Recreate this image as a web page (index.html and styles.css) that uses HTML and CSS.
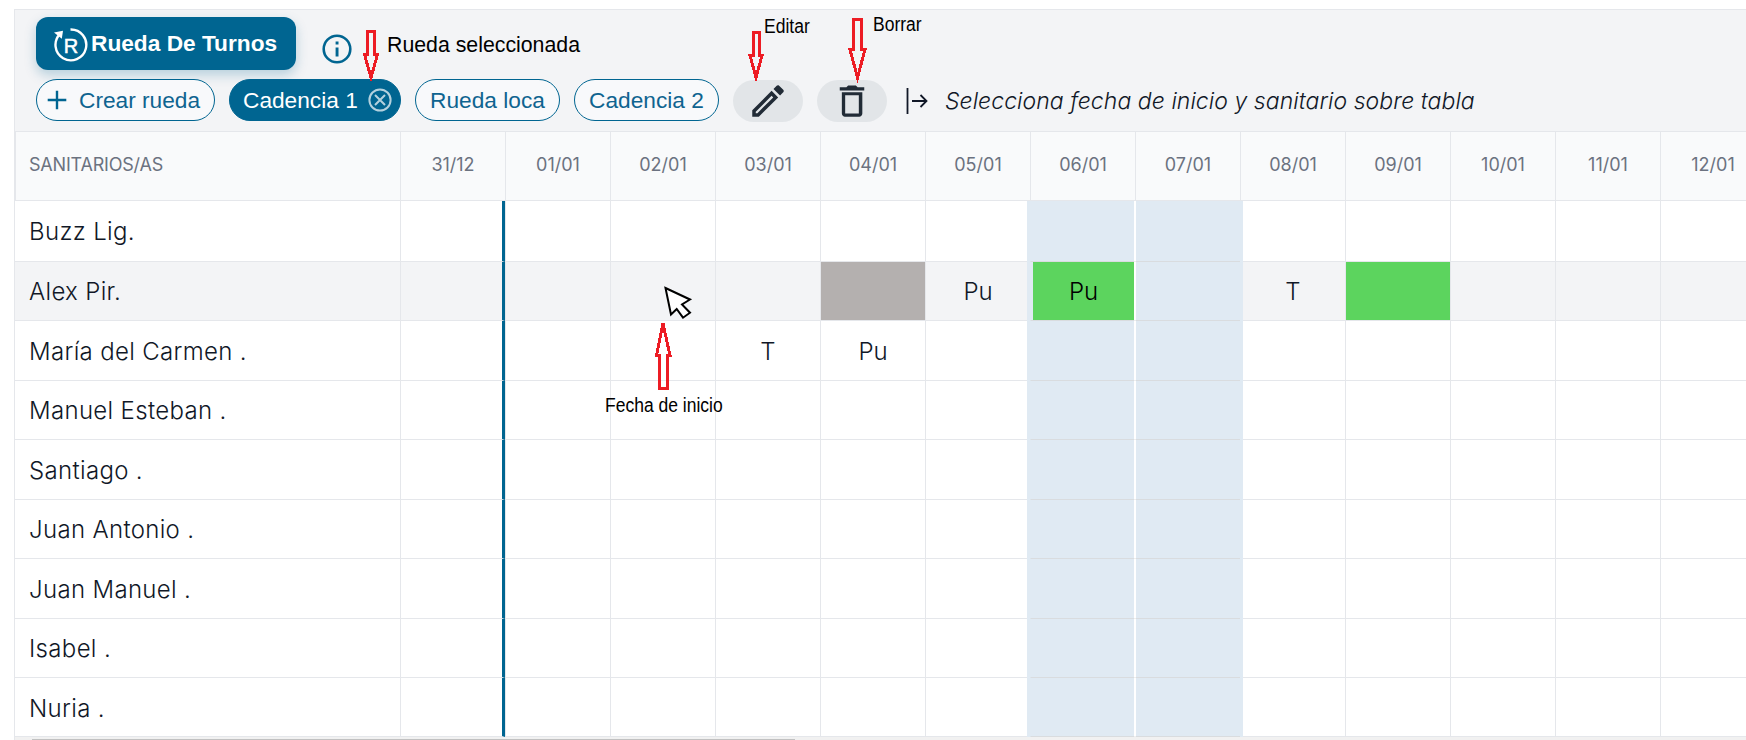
FILE: index.html
```
<!DOCTYPE html>
<html lang="es">
<head>
    <meta charset="UTF-8">
    <meta name="viewport" content="width=device-width, initial-scale=1.0">
    <title>Rueda De Turnos</title>
    <link rel="stylesheet" href="styles.css">
</head>
<body>
    <div class="planner">
        <div class="toolbar">
            <div class="toolbar-row toolbar-top">
                <button class="btn-wheel">
                    <svg class="wheel-icon" width="36" height="36" viewBox="0 0 36 36" fill="none" stroke="#fff" stroke-width="2.4">
                        <path d="M17.5 2.5A15.4 15.4 0 1 1 7.2 6.8"/>
                        <path d="M1 5.5L10 3.8L8.8 11.8Z" fill="#fff" stroke="none"/>
                        <text x="18" y="25.5" class="wheel-letter">R</text>
                    </svg>
                    <span>Rueda De Turnos</span>
                </button>
                <svg class="info-icon" width="30" height="30" viewBox="0 0 30 30">
                    <circle cx="15" cy="15" r="13.3" fill="none" stroke="#006591" stroke-width="2.6"/>
                    <path d="M13.6 7.6h2.9v3h-2.9zM13.6 13.4h2.9v9h-2.9z" fill="#006591"/>
                </svg>
            </div>
            <div class="toolbar-row">
                <button class="chip chip-create">
                    <svg width="20" height="20" viewBox="0 0 20 20" stroke="#006591" stroke-width="2.4"><path d="M10 .7v18.6M.7 10h18.6"/></svg>
                    <span>Crear rueda</span>
                </button>
                <button class="chip chip-selected">
                    <span>Cadencia 1</span>
                    <svg width="24" height="24" viewBox="0 0 24 24" fill="none" stroke="#b3d1de" stroke-width="2"><circle cx="12" cy="12" r="10.6"/><path d="M7 7l10 10M17 7L7 17"/></svg>
                </button>
                <button class="chip chip-loca">Rueda loca</button>
                <button class="chip chip-second">Cadencia 2</button>
                <button class="icon-btn">
                    <svg width="42" height="42" viewBox="0 0 24 24" fill="#212b36"><path d="M14.06 9.02l.92.92L5.92 19H5v-.92l9.06-9.06M17.66 3c-.25 0-.51.1-.7.29l-1.83 1.83 3.75 3.75 1.83-1.83c.39-.39.39-1.02 0-1.41l-2.34-2.34c-.2-.2-.45-.29-.71-.29zm-3.6 3.19L3 17.25V21h3.75L17.81 9.94l-3.75-3.75z"/></svg>
                </button>
                <button class="icon-btn">
                    <svg width="42" height="42" viewBox="0 0 24 24" fill="#212b36"><path d="M8 21c-.95 0-1.8-.7-1.8-1.8V7h11.7v12.2c0 1.1-.8 1.8-1.8 1.8zM8.1 8.7v10.5h7.8V8.7zM5 4.1h3.8l1-1h4.4l1 1H19v1.9H5z" fill-rule="evenodd"/></svg>
                </button>
                <div class="hint">
                    <svg width="24" height="28" viewBox="0 0 24 28" fill="none" stroke="#111827" stroke-width="1.8"><path d="M2.5 1v26M7 14h14M15.5 8l6 6-6 6"/></svg>
                    <span>Selecciona fecha de inicio y sanitario sobre tabla</span>
                </div>
            </div>
        </div>

        <div class="grid-row grid-head" id="head">
            <div class="name">SANITARIOS/AS</div>
        </div>
        <div id="rows"></div>
        <div class="scrollbar"><div class="thumb"></div></div>
    </div>

    <!-- Help notes over the planner -->
    <svg class="overlay" width="1746" height="740" viewBox="0 0 1746 740">
        <g class="arrows">
            <path d="M367.5 31.5h7v23h3l-6.500 23l-6.500-23h3z"/>
            <path d="M753.5 32.5h5.5v23h3l-6 22l-6-22h3.5z"/>
            <path d="M853.5 19.5h7.5v30h4l-7.500 28l-7.500-28h3.500z"/>
            <path d="M659.500 388.500h7.500v-33h3l-7-32l-6.500 32h3z"/>
        </g>
        <path class="cursor" d="M665.500 288L690 299.500L682 304.500L690 312.700L683 317.700L676.700 309L671 314.500Z"/>
    </svg>
    <div class="note note-selected">Rueda seleccionada</div>
    <div class="note narrow note-edit">Editar</div>
    <div class="note narrow note-delete">Borrar</div>
    <div class="note narrow note-start">Fecha de inicio</div>

    <script>
        const days = ['31/12', '01/01', '02/01', '03/01', '04/01', '05/01', '06/01', '07/01', '08/01', '09/01', '10/01', '11/01', '12/01'];
        const staff = [
            { name: 'Buzz Lig.' },
            { name: 'Alex Pir.', active: true, shifts: {
                '04/01': ['', 'gray'],
                '05/01': ['Pu'],
                '06/01': ['Pu', 'green'],
                '08/01': ['T'],
                '09/01': ['', 'green']
            } },
            { name: 'María del Carmen .', shifts: { '03/01': ['T'], '04/01': ['Pu'] } },
            { name: 'Manuel Esteban .' },
            { name: 'Santiago .' },
            { name: 'Juan Antonio .' },
            { name: 'Juan Manuel .' },
            { name: 'Isabel .' },
            { name: 'Nuria .' }
        ];
        const dayClass = { '31/12': 'year-end', '06/01': 'holiday first', '07/01': 'holiday last' };

        function addDiv(parent, className, text) {
            const div = document.createElement('div');
            div.className = className;
            div.textContent = text || '';
            parent.appendChild(div);
            return div;
        }

        days.forEach(day => addDiv(document.getElementById('head'), 'cell', day));

        staff.forEach(person => {
            const row = addDiv(document.getElementById('rows'), 'grid-row' + (person.active ? ' active' : ''));
            addDiv(row, 'name', person.name);
            days.forEach(day => {
                const shift = (person.shifts || {})[day];
                const cell = addDiv(row, 'cell ' + (dayClass[day] || ''));
                if (shift) {
                    addDiv(cell, 'shift ' + (shift[1] || ''), shift[0]);
                }
            });
        });
    </script>
</body>
</html>
```
FILE: styles.css
```
* {
    box-sizing: border-box;
}
body {
    margin: 0;
    height: 740px;
    overflow: hidden;
    background: white;
    font-family: Inter, sans-serif;
    color: #111827;
}
.planner {
    margin: 9px 0 0 14px;
    border-top: 1px solid #e5e7eb;
    border-left: 1px solid #e5e7eb;
    height: 731px;
    overflow: hidden;
}
.toolbar {
    height: 121px;
    padding: 7px 0 0 21px;
    background: #f3f4f6;
}
.toolbar-row {
    display: flex;
    align-items: flex-start;
    gap: 14px;
}
.toolbar-top {
    align-items: center;
    height: 53px;
    margin-bottom: 9px;
    gap: 26px;
}
button {
    margin: 0;
    padding: 0;
    border: none;
    font-family: "Liberation Sans", Arial, sans-serif;
    font-size: 22.7px;
    white-space: nowrap;
    cursor: pointer;
}
.btn-wheel {
    display: flex;
    align-items: center;
    width: 260px;
    height: 53px;
    padding-left: 17px;
    gap: 2px;
    border-radius: 12px;
    background: #006591;
    color: white;
    font-weight: bold;
    box-shadow: 0 5px 12px rgba(0, 101, 145, 0.25);
}
.wheel-icon {
    margin-top: 3px;
}
.wheel-letter {
    font: 20px "Liberation Sans", Arial, sans-serif;
    fill: white;
    stroke: white;
    stroke-width: 0.5px;
    text-anchor: middle;
}
.info-icon {
    margin-top: 10px;
}
.chip {
    display: flex;
    align-items: center;
    justify-content: center;
    width: 145px;
    height: 42px;
    border: 1px solid #006591;
    border-radius: 21px;
    background: #f8f9fb;
    color: #0f6490;
}
.chip-create {
    justify-content: flex-start;
    width: 179px;
    padding-left: 10px;
    gap: 12px;
}
.chip-selected {
    justify-content: flex-start;
    width: 172px;
    padding-left: 13px;
    gap: 10px;
    background: #006591;
    color: white;
}
.icon-btn {
    display: flex;
    align-items: center;
    justify-content: center;
    width: 70px;
    height: 42px;
    margin-top: 1px;
    border-radius: 21px;
    background: #e2e5e8;
}
.hint {
    display: flex;
    align-items: center;
    gap: 16px;
    height: 44px;
    margin-left: 4px;
    font-size: 23px;
    font-style: italic;
    font-weight: 300;
    letter-spacing: 0.06px;
    white-space: nowrap;
}
.grid-row {
    display: grid;
    grid-template-columns: 385px repeat(13, 105px);
    height: 59.5px;
    font-size: 24px;
    font-weight: 300;
}
#rows .grid-row:first-child {
    height: 60.5px;
}
#rows .grid-row:last-child {
    height: 59px;
}
.grid-row.active {
    background: #f3f4f6;
}
.grid-row.grid-head {
    height: 70px;
    border-top: 1px solid #e5e7eb;
    border-left: 1px solid #e5e7eb;
    grid-template-columns: 384px repeat(13, 105px);
    background: #f9fafb;
    color: #6b7280;
    font-size: 18px;
    font-weight: 400;
}
.name {
    display: flex;
    align-items: center;
    padding: 2px 0 0 14px;
    border-bottom: 1px solid #e5e7eb;
    letter-spacing: 0.33px;
}
.grid-head .name {
    padding: 0 0 4px 13px;
    letter-spacing: -0.2px;
}
.cell {
    position: relative;
    display: flex;
    align-items: stretch;
    border-left: 1px solid #e5e7eb;
    border-bottom: 1px solid #e5e7eb;
}
.grid-head .cell {
    align-items: center;
    justify-content: center;
    padding-bottom: 4px;
}
.shift {
    flex: 1;
    display: flex;
    align-items: center;
    justify-content: center;
    padding-top: 2px;
}
.gray {
    background: #b4b0af;
}
.green {
    background: #5cd45e;
    color: black;
}
.year-end {
    border-right: 3px solid #006591;
}
.holiday {
    z-index: 1;
    background: #e0eaf3;
    border-bottom-color: #d9dcdf;
}
.first {
    border-left-color: #e0eaf3;
    border-right: 1px solid white;
    box-shadow: -3px 0 0 #e0eaf3;
}
.first .shift {
    margin-left: 2px;
}
.last {
    border-left-color: white;
    box-shadow: 3px 0 0 #e0eaf3;
}
.scrollbar {
    height: 3px;
    padding: 2px 0 0 17px;
    background: #f1f1f1;
}
.thumb {
    width: 763px;
    height: 1px;
    background: #c1c1c1;
}
.overlay {
    position: absolute;
    top: 0;
    left: 0;
    z-index: 2;
    pointer-events: none;
}
.arrows {
    fill: none;
    stroke: #ed1c24;
    stroke-width: 3px;
    shape-rendering: crispEdges;
}
.cursor {
    fill: white;
    stroke: black;
    stroke-width: 2px;
}
.note {
    position: absolute;
    z-index: 3;
    color: black;
    font-family: "Liberation Sans", Arial, sans-serif;
    font-size: 21.3px;
    line-height: 24px;
    white-space: nowrap;
}
.narrow {
    font-size: 20px;
    transform: scaleX(0.875);
    transform-origin: 0 0;
}
.note-selected {
    left: 387px;
    top: 33px;
}
.note-edit {
    left: 764px;
    top: 14px;
}
.note-delete {
    left: 873px;
    top: 12px;
}
.note-start {
    left: 605px;
    top: 393px;
}
```
